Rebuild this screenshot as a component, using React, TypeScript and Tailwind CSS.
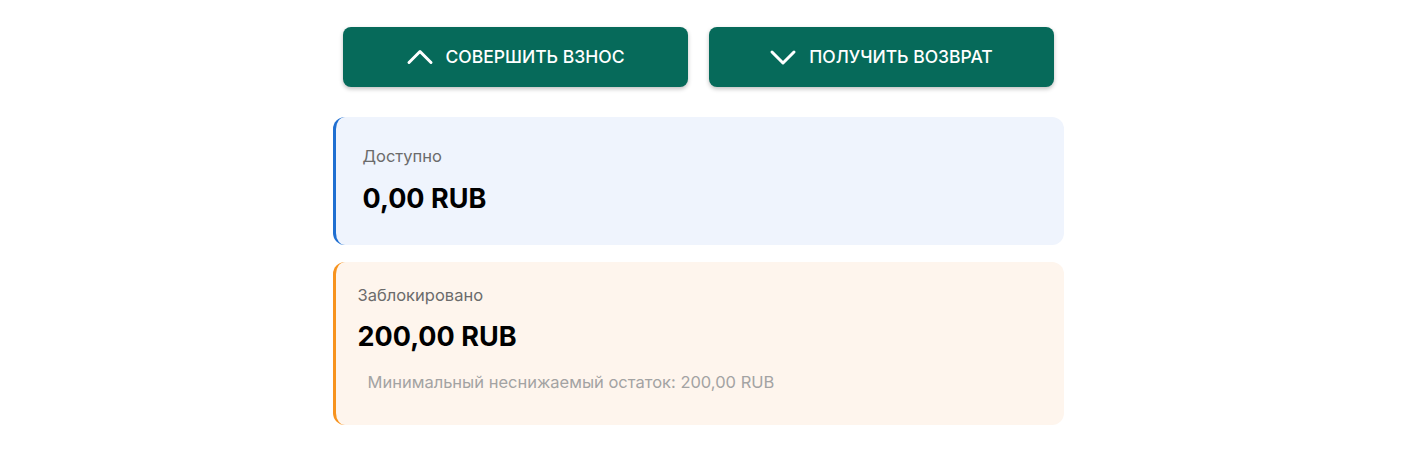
export default function App() {
  return (
    <div className="flex justify-center bg-white pt-[27px] pr-[14px] font-['Inter',sans-serif]">
      <div className="w-[731px] flex flex-col">
        <div className="flex gap-[21px] px-[10px]">
          <button
            type="button"
            className="flex-1 h-[60px] rounded-lg bg-[#066a5a] text-white shadow-[0_2px_4px_rgba(0,0,0,0.25)] flex items-center justify-center gap-[12px] text-[17.5px] font-medium uppercase"
          >
            <svg className="w-[28px] h-[28px]" fill="none" stroke="currentColor" viewBox="0 0 28 28" strokeWidth={3}>
              <path strokeLinecap="round" strokeLinejoin="round" d="M3 19.5L14 8.5 25 19.5" />
            </svg>
            Совершить взнос
          </button>
          <button
            type="button"
            className="flex-1 h-[60px] rounded-lg bg-[#066a5a] text-white shadow-[0_2px_4px_rgba(0,0,0,0.25)] flex items-center justify-center gap-[12px] text-[17.5px] font-medium uppercase"
          >
            <svg className="w-[28px] h-[28px]" fill="none" stroke="currentColor" viewBox="0 0 28 28" strokeWidth={3}>
              <path strokeLinecap="round" strokeLinejoin="round" d="M3 9L14 20 25 9" />
            </svg>
            Получить возврат
          </button>
        </div>

        {/* Available */}
        <div className="mt-[30px] h-[128px] rounded-xl border-l-[3px] border-[#1f6fd1] bg-[#eff4fd] pl-[27px] pt-[27px]">
          <p className="text-[16.5px] leading-[24px] text-[#6b6b6b]">Доступно</p>
          <p className="mt-[13px] text-[27px] leading-[36px] font-bold text-black">0,00 RUB</p>
        </div>

        {/* Blocked */}
        <div className="mt-[17px] h-[163px] rounded-xl border-l-[3px] border-[#f7931e] bg-[#fef5ed] pl-[22px] pt-[21px]">
          <p className="text-[16.5px] leading-[24px] text-[#6b6b6b]">Заблокировано</p>
          <p className="mt-[12px] text-[27px] leading-[36px] font-bold text-black">200,00 RUB</p>
          <p className="mt-[16px] pl-[10px] text-[16.5px] leading-[22px] text-[#a3a3a3]">
            Минимальный неснижаемый остаток: 200,00 RUB
          </p>
        </div>
      </div>
    </div>
  )
}
